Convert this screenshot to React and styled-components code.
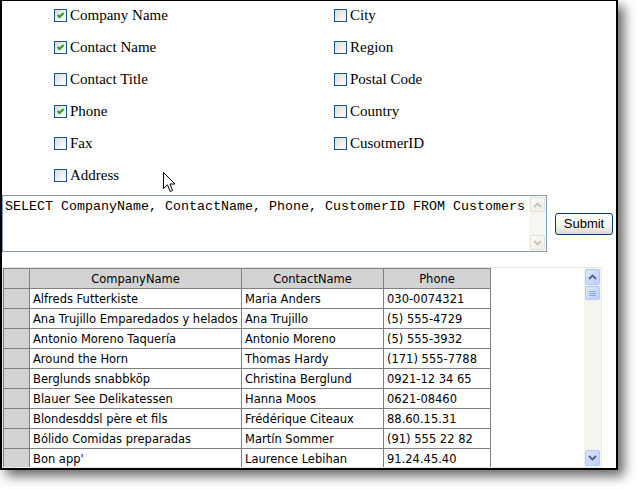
import React from 'react';
import styled, { createGlobalStyle } from 'styled-components';

const Global = createGlobalStyle`
  html, body { margin: 0; padding: 0; background: #fff; }
  #root { width: 637px; height: 490px; overflow: hidden; }
`;

const Window = styled.div`
  position: relative;
  box-sizing: border-box;
  width: 618px;
  height: 470px;
  border: 2px solid #000;
  border-top-width: 1px;
  background: #fff;
  box-shadow: 6px 6px 11px rgba(0, 0, 0, 0.6);
  display: flex;
  flex-direction: column;
  overflow: hidden;
`;

const Options = styled.div`
  display: grid;
  grid-template-columns: 280px 1fr;
  grid-template-rows: repeat(6, 32px);
  grid-auto-flow: column;
  padding-left: 52px;
  margin-top: -2px;
  flex: none;
`;

const Option = styled.label`
  display: flex;
  align-items: center;
  gap: 3px;
  font-family: "Liberation Serif", "Times New Roman", serif;
  font-size: 15px;
  color: #000;
`;

const Box = styled.span`
  box-sizing: border-box;
  width: 13px;
  height: 13px;
  border: 1px solid #1c5180;
  background: linear-gradient(135deg, #dcdcd5 0%, #ededea 50%, #ffffff 100%);
  display: flex;
  align-items: center;
  justify-content: center;
  flex: none;
`;

const CheckBox = ({ checked }) => (
  <Box>
    {checked && (
      <svg width="11" height="11" viewBox="0 0 11 11">
        <path d="M2.5 5 L4.5 7 L8.5 3" fill="none" stroke="#21a121" strokeWidth="2" />
      </svg>
    )}
  </Box>
);

const QueryRow = styled.div`
  display: flex;
  align-items: center;
  gap: 8px;
  margin-top: 4px;
  flex: none;
`;

const TextBox = styled.div`
  box-sizing: border-box;
  width: 545px;
  height: 57px;
  border: 1px solid #7f9db9;
  display: flex;
  background: #fff;
`;

const Sql = styled.textarea`
  flex: 1;
  border: none;
  outline: none;
  resize: none;
  overflow: hidden;
  margin: 0;
  padding: 3px 2px;
  font-family: "Liberation Mono", "Courier New", monospace;
  font-size: 13.33px;
  line-height: 15px;
  color: #000;
  background: transparent;
`;

const VBar = styled.div`
  box-sizing: border-box;
  width: ${p => p.$w}px;
  display: flex;
  flex-direction: column;
  justify-content: space-between;
  padding: 1px 1px 1px 1px;
  background: ${p => p.$track};
  flex: none;
`;

const BarButton = styled.div`
  box-sizing: border-box;
  width: 15px;
  height: ${p => p.$h}px;
  border-radius: 2px;
  border: 1px solid ${p => (p.$disabled ? '#e4e2d8' : '#b4c8f6')};
  background: ${p =>
    p.$disabled
      ? 'linear-gradient(135deg, #fbfbf8, #eeede5)'
      : 'linear-gradient(135deg, #dce7fe, #bccffa)'};
  display: flex;
  align-items: center;
  justify-content: center;
`;

const Thumb = styled(BarButton)`
  margin-top: 1px;
`;

const TrackTop = styled.div`
  display: flex;
  flex-direction: column;
`;

const Chevron = ({ up, color }) => (
  <svg width="9" height="6" viewBox="0 0 9 6">
    <path
      d={up ? 'M1 5 L4.5 1.5 L8 5' : 'M1 1 L4.5 4.5 L8 1'}
      fill="none"
      stroke={color}
      strokeWidth="1.8"
    />
  </svg>
);

const Grip = () => (
  <svg width="7" height="7" viewBox="0 0 7 7">
    <path d="M0 1.5 H7 M0 3.5 H7 M0 5.5 H7" stroke="#8aa6e8" strokeWidth="1" />
  </svg>
);

const SubmitButton = styled.button`
  box-sizing: border-box;
  width: 58px;
  height: 22px;
  padding: 0;
  border: 1px solid #003c74;
  border-radius: 3px;
  background: linear-gradient(#ffffff 0%, #f4f3ee 60%, #dcd8cc 100%);
  font-family: "Liberation Sans", Arial, sans-serif;
  font-size: 13px;
  color: #000;
`;

const GridBox = styled.div`
  box-sizing: border-box;
  width: 600px;
  height: 201px;
  margin-top: 15px;
  border: 1px solid #ebe9dc;
  display: flex;
  flex: none;
  background: #fff;
`;

const TableArea = styled.div`
  flex: 1;
  overflow: hidden;
`;

const Table = styled.table`
  border-collapse: separate;
  border-spacing: 0;
  table-layout: fixed;
  border-left: 1px solid #808080;
  border-top: 1px solid #808080;
  font-family: "DejaVu Sans", Verdana, sans-serif;
  font-size: 11.5px;
  color: #000;
`;

const Cell = styled.td`
  box-sizing: border-box;
  height: 20px;
  padding: 0 3px;
  border-right: 1px solid #808080;
  border-bottom: 1px solid #808080;
  background: ${p => (p.$head ? '#d3d3d3' : '#fff')};
  text-align: ${p => (p.$center ? 'center' : 'left')};
  font-weight: normal;
  white-space: nowrap;
  overflow: hidden;
  line-height: 18px;
`;

const HeadCell = styled(Cell).attrs({ as: 'th' })``;

const Cursor = styled.svg`
  position: absolute;
  left: 161px;
  top: 171px;
`;

const left = ['Company Name', 'Contact Name', 'Contact Title', 'Phone', 'Fax', 'Address'];
const right = ['City', 'Region', 'Postal Code', 'Country', 'CusotmerID'];
const checked = new Set(['Company Name', 'Contact Name', 'Phone']);

const rows = [
  ['Alfreds Futterkiste', 'Maria Anders', '030-0074321'],
  ['Ana Trujillo Emparedados y helados', 'Ana Trujillo', '(5) 555-4729'],
  ['Antonio Moreno Taquería', 'Antonio Moreno', '(5) 555-3932'],
  ['Around the Horn', 'Thomas Hardy', '(171) 555-7788'],
  ['Berglunds snabbköp', 'Christina Berglund', '0921-12 34 65'],
  ['Blauer See Delikatessen', 'Hanna Moos', '0621-08460'],
  ['Blondesddsl père et fils', 'Frédérique Citeaux', '88.60.15.31'],
  ['Bólido Comidas preparadas', 'Martín Sommer', '(91) 555 22 82'],
  ['Bon app\'', 'Laurence Lebihan', '91.24.45.40'],
];

export default function App() {
  return (
    <>
      <Global />
      <Window>
        <Options>
          {[...left, ...right].map(name => (
            <Option key={name}>
              <CheckBox checked={checked.has(name)} />
              {name}
            </Option>
          ))}
        </Options>

        <QueryRow>
          <TextBox>
            <Sql
              readOnly
              value="SELECT CompanyName, ContactName, Phone, CustomerID FROM Customers"
            />
            <VBar $w={17} $track="#f7f6f1">
              <BarButton $h={15} $disabled>
                <Chevron up color="#c5c3b8" />
              </BarButton>
              <BarButton $h={15} $disabled>
                <Chevron color="#c5c3b8" />
              </BarButton>
            </VBar>
          </TextBox>
          <SubmitButton type="button">Submit</SubmitButton>
        </QueryRow>

        <GridBox>
          <TableArea>
            <Table>
              <colgroup>
                <col style={{ width: 26 }} />
                <col style={{ width: 212 }} />
                <col style={{ width: 142 }} />
                <col style={{ width: 107 }} />
              </colgroup>
              <thead>
                <tr>
                  <HeadCell $head />
                  <HeadCell $head $center>CompanyName</HeadCell>
                  <HeadCell $head $center>ContactName</HeadCell>
                  <HeadCell $head $center>Phone</HeadCell>
                </tr>
              </thead>
              <tbody>
                {rows.map(r => (
                  <tr key={r[0]}>
                    <Cell $head />
                    <Cell>{r[0]}</Cell>
                    <Cell>{r[1]}</Cell>
                    <Cell>{r[2]}</Cell>
                  </tr>
                ))}
              </tbody>
            </Table>
          </TableArea>
          <VBar $w={17} $track="#f5f4ef">
            <TrackTop>
              <BarButton $h={16}>
                <Chevron up color="#4d6185" />
              </BarButton>
              <Thumb $h={14}>
                <Grip />
              </Thumb>
            </TrackTop>
            <BarButton $h={16}>
              <Chevron color="#4d6185" />
            </BarButton>
          </VBar>
        </GridBox>

        <Cursor width="13" height="21" viewBox="0 0 13 21">
          <path
            d="M0.5 0.5 L0.5 16.5 L4.5 12.8 L7.2 19.5 L9.6 18.5 L7 12 L12 12 Z"
            fill="#fff"
            stroke="#000"
            strokeWidth="1"
            strokeLinejoin="miter"
          />
        </Cursor>
      </Window>
    </>
  );
}
